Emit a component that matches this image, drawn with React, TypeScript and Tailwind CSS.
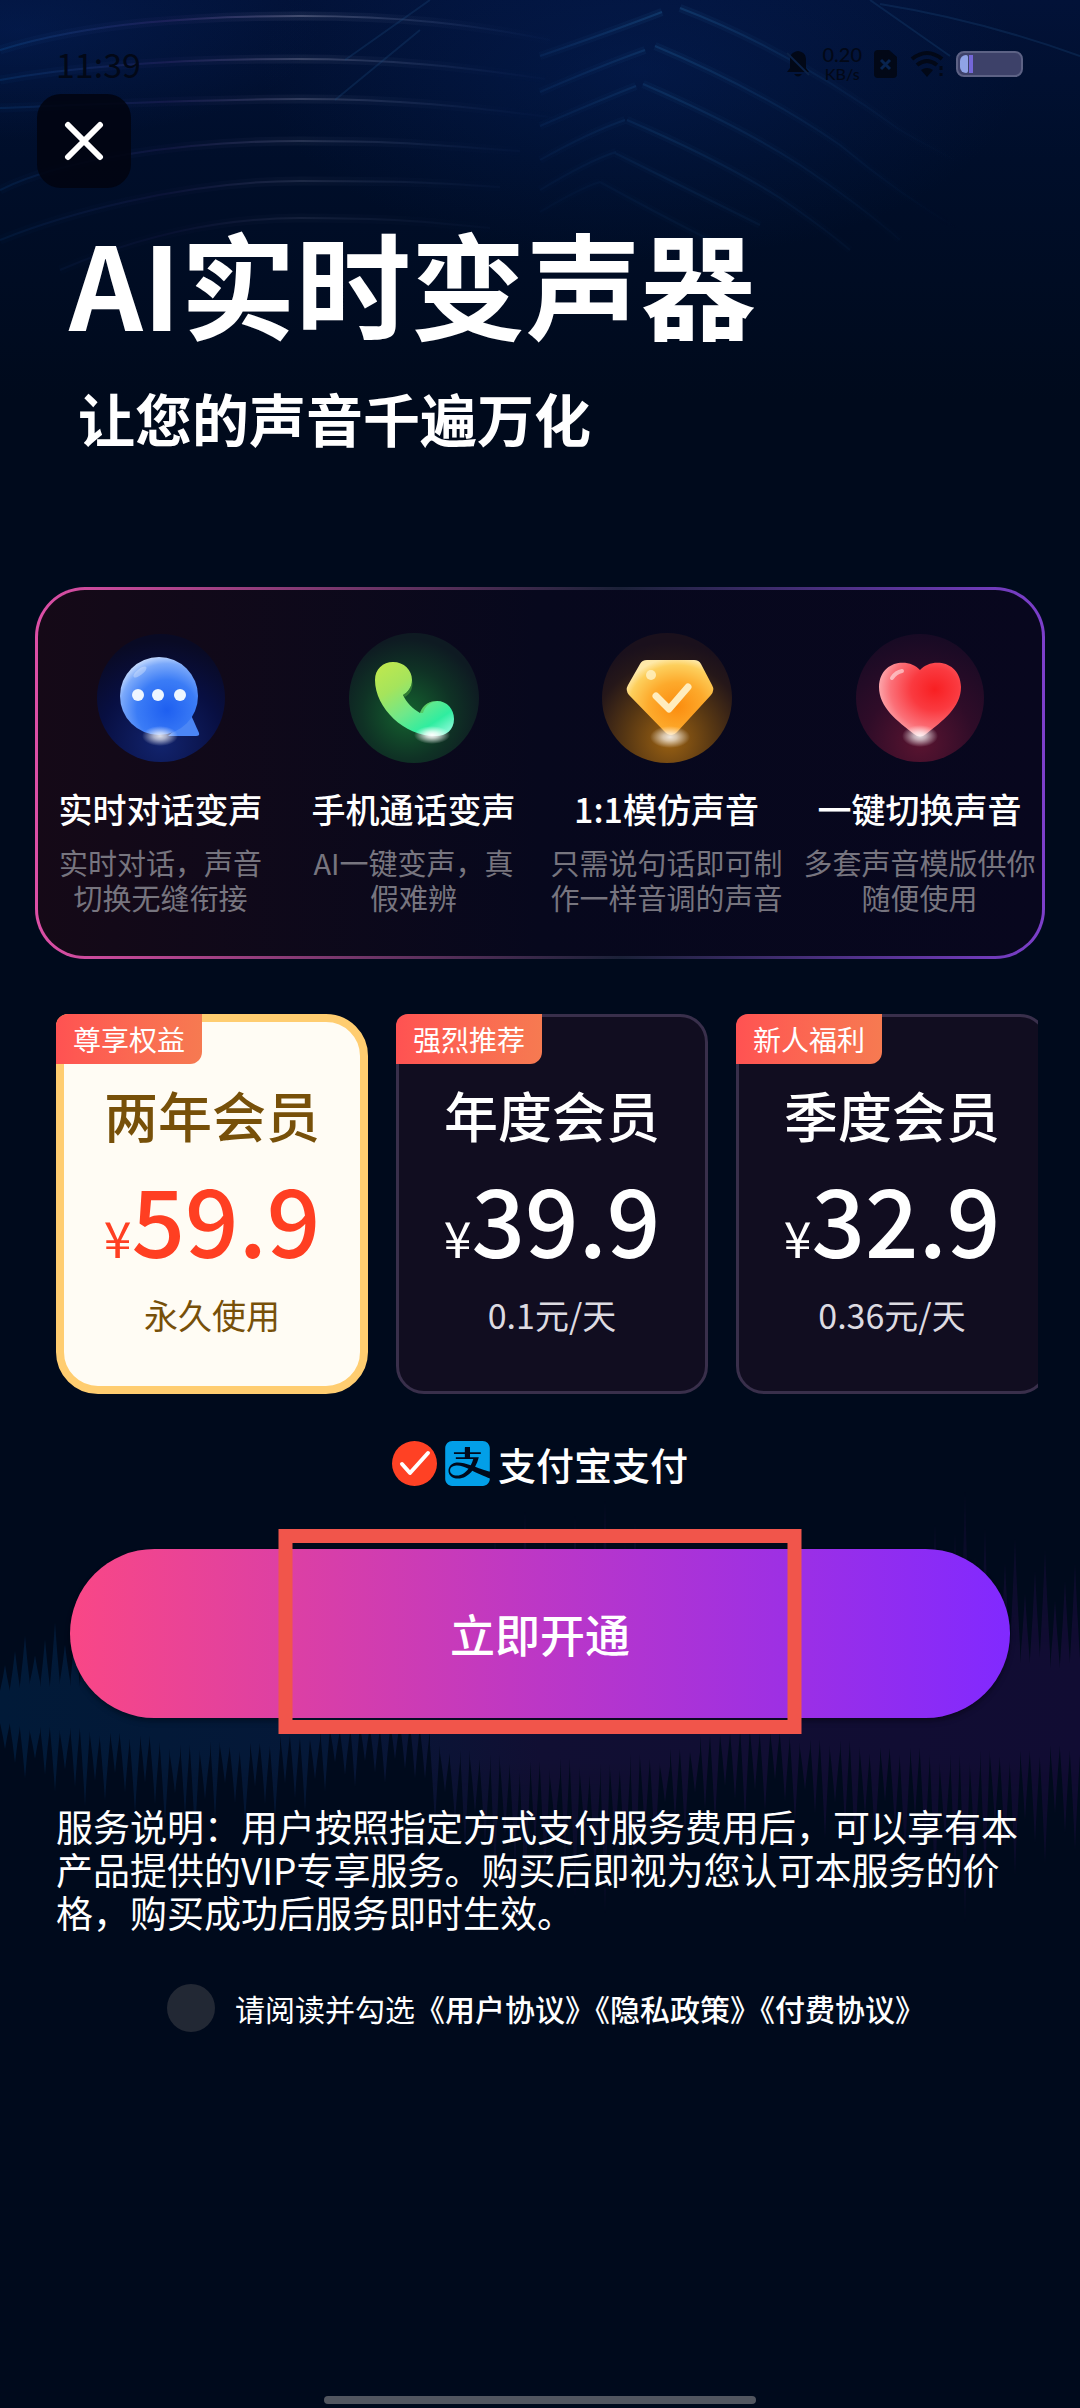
import { useState } from 'react'
import { SiAlipay } from 'react-icons/si'

interface Plan {
  id: string
  badge: string
  name: string
  price: string
  note: string
}

const PLANS: Plan[] = [
  { id: 'two-year', badge: '尊享权益', name: '两年会员', price: '59.9', note: '永久使用' },
  { id: 'year', badge: '强烈推荐', name: '年度会员', price: '39.9', note: '0.1元/天' },
  { id: 'season', badge: '新人福利', name: '季度会员', price: '32.9', note: '0.36元/天' },
]

const FEATURES = [
  { icon: ChatIcon, title: '实时对话变声', text: '实时对话，声音\n切换无缝衔接' },
  { icon: PhoneIcon, title: '手机通话变声', text: 'AI一键变声，真\n假难辨' },
  { icon: GemIcon, title: '1:1模仿声音', text: '只需说句话即可制\n作一样音调的声音' },
  { icon: HeartIcon, title: '一键切换声音', text: '多套声音模版供你\n随便使用' },
]

function ChatIcon() {
  return (
    <svg viewBox="0 0 130 130" className="size-[130px]" aria-hidden="true">
      <defs>
        <radialGradient id="chatBg" cx="0.5" cy="0.85" r="0.8">
          <stop offset="0" stopColor="#12246e" />
          <stop offset="0.6" stopColor="#080f42" />
          <stop offset="1" stopColor="#090a24" />
        </radialGradient>
        <radialGradient id="chatBody" cx="0.6" cy="0.68" r="0.7">
          <stop offset="0" stopColor="#1e5ff0" />
          <stop offset="0.55" stopColor="#3b7cf6" />
          <stop offset="0.85" stopColor="#7ba9fa" />
          <stop offset="1" stopColor="#c3d9fd" />
        </radialGradient>
        <radialGradient id="spot">
          <stop offset="0" stopColor="#fff" />
          <stop offset="0.35" stopColor="#fff" stopOpacity="0.75" />
          <stop offset="1" stopColor="#fff" stopOpacity="0" />
        </radialGradient>
      </defs>
      <circle cx="65" cy="65" r="64" fill="url(#chatBg)" />
      <path d="M95 82 103 100q1 3-3 3H72z" fill="#4b86f5" />
      <circle cx="63" cy="63" r="39" fill="url(#chatBody)" />
      <ellipse cx="44" cy="39" rx="8" ry="3" transform="rotate(-38 44 39)" fill="#fff" opacity="0.3" />
      <circle cx="42" cy="62" r="6" fill="#eef6ff" />
      <circle cx="62" cy="62" r="6" fill="#eef6ff" />
      <circle cx="84" cy="62" r="6" fill="#eef6ff" />
      <ellipse cx="64" cy="103" rx="18" ry="10" fill="url(#spot)" opacity="0.85" />
    </svg>
  )
}

function PhoneIcon() {
  return (
    <svg viewBox="0 0 130 130" className="size-[130px]" aria-hidden="true">
      <defs>
        <radialGradient id="phoneBg" cx="0.45" cy="0.62" r="0.58">
          <stop offset="0" stopColor="#14632f" />
          <stop offset="0.6" stopColor="#0f3225" />
          <stop offset="1" stopColor="#0e1a22" />
        </radialGradient>
        <linearGradient id="phoneBody" x1="0.1" y1="0" x2="0.8" y2="1">
          <stop offset="0" stopColor="#bfe84e" />
          <stop offset="0.3" stopColor="#a5e45c" />
          <stop offset="0.6" stopColor="#6fe88a" />
          <stop offset="0.85" stopColor="#2feda0" />
          <stop offset="1" stopColor="#7df7cf" />
        </linearGradient>
      </defs>
      <circle cx="65" cy="65" r="65" fill="url(#phoneBg)" />
      <path
        d="M26 47c0-11 8-18 18-18 11 0 19 8 19 18 0 7-4 12-9 15 3 7 10 14 17 18 3-8 9-12 17-12 10 0 17 8 17 18 0 11-8 17-18 17C57 104 26 76 26 47z"
        fill="url(#phoneBody)"
      />
      <path d="M54 62c5-3 9-8 9-15 2 8-2 14-7 17zM71 80c2-7 8-12 17-12-7 1-12 5-14 12z" fill="#4fae3c" opacity="0.5" />
      <ellipse cx="83" cy="102" rx="18" ry="9" fill="url(#spot)" />
    </svg>
  )
}

function GemIcon() {
  return (
    <svg viewBox="0 0 130 130" className="size-[130px]" aria-hidden="true">
      <defs>
        <radialGradient id="gemBg" cx="0.52" cy="0.82" r="0.75">
          <stop offset="0" stopColor="#9c6212" />
          <stop offset="0.45" stopColor="#573713" />
          <stop offset="0.8" stopColor="#251719" />
          <stop offset="1" stopColor="#1a101c" />
        </radialGradient>
        <radialGradient id="gemBody" cx="0.58" cy="0.62" r="0.65">
          <stop offset="0" stopColor="#fb8c0e" />
          <stop offset="0.5" stopColor="#fdaa2c" />
          <stop offset="0.85" stopColor="#fdcf5c" />
          <stop offset="1" stopColor="#fee9a8" />
        </radialGradient>
      </defs>
      <circle cx="65" cy="65" r="65" fill="url(#gemBg)" />
      <path
        d="M45 27h47q5 0 7 4l11 21q3 5-1 10L76 98q-7 8-14 0L27 62q-4-5-1-10l12-21q2-4 7-4z"
        fill="url(#gemBody)"
      />
      <circle cx="49" cy="42" r="5" fill="#fff6cf" opacity="0.75" />
      <path d="M54 63l13 13 19-22" fill="none" stroke="#ffecbd" strokeWidth="7" strokeLinecap="round" strokeLinejoin="round" />
      <ellipse cx="68" cy="104" rx="20" ry="11" fill="url(#spot)" opacity="0.85" />
    </svg>
  )
}

function HeartIcon() {
  return (
    <svg viewBox="0 0 130 130" className="size-[130px]" aria-hidden="true">
      <defs>
        <radialGradient id="heartBg" cx="0.5" cy="0.85" r="0.85">
          <stop offset="0" stopColor="#5a1430" />
          <stop offset="0.5" stopColor="#2f0c28" />
          <stop offset="1" stopColor="#170a24" />
        </radialGradient>
        <radialGradient id="heartBody" cx="0.68" cy="0.36" r="0.72">
          <stop offset="0" stopColor="#f81f22" />
          <stop offset="0.4" stopColor="#fa3a40" />
          <stop offset="0.75" stopColor="#fb7078" />
          <stop offset="1" stopColor="#fdb3b8" />
        </radialGradient>
      </defs>
      <circle cx="65" cy="65" r="64" fill="url(#heartBg)" />
      <path
        d="M65 37c10-12 40-11 41 17 0 20-18 34-35 47q-6 5-12 0C42 88 24 74 24 54c1-28 31-29 41-17z"
        fill="url(#heartBody)"
      />
      <path d="M37 45q4-6 10-7" fill="none" stroke="#fff" strokeWidth="4" strokeLinecap="round" opacity="0.5" />
      <ellipse cx="65" cy="103" rx="18" ry="11" fill="url(#spot)" opacity="0.85" />
    </svg>
  )
}

// Faint light trails behind the header
const ARCS = [
  'M0 50C90 22 200 16 300 16s170 8 250 24',
  'M0 80C90 64 200 59 295 59s170 8 250 20',
  'M0 108C100 104 200 99 300 99s170 8 250 18',
  'M0 190C60 160 180 141 300 141s150 6 220 10',
  'M0 240C60 216 180 181 300 181s130 2 200 6',
  'M60 270C130 240 210 218 300 218s130 4 190 10',
]

const RAYS = [
  'M540 56Q610 32 662 12M680 8Q790 50 900 130 960 165 1040 200',
  'M540 92Q600 66 645 50M655 46Q760 90 840 145 900 195 960 230',
  'M540 126Q600 100 636 86M643 84Q740 126 800 165 860 205 900 240',
  'M540 160Q590 132 625 120M627 120Q720 160 780 198 820 225 850 250',
  'M540 190Q590 160 616 152M615 153Q700 195 760 225',
  'M540 212Q580 188 600 182M600 182Q660 215 710 240',
]

function TopGlow() {
  return (
    <svg viewBox="0 0 1080 400" className="absolute inset-x-0 top-0 w-full" aria-hidden="true">
      <defs>
        <linearGradient id="sky" x1="0" y1="0" x2="0" y2="1">
          <stop offset="0" stopColor="#021238" />
          <stop offset="0.4" stopColor="#000e2a" />
          <stop offset="1" stopColor="#000a1c" />
        </linearGradient>
        <linearGradient id="arc" gradientUnits="userSpaceOnUse" x1="0" y1="0" x2="550" y2="0">
          <stop offset="0" stopColor="#0d4a8c" stopOpacity="0.5" />
          <stop offset="0.3" stopColor="#352c72" stopOpacity="0.6" />
          <stop offset="0.55" stopColor="#6b7190" stopOpacity="0.8" />
          <stop offset="1" stopColor="#0e2c66" stopOpacity="0.1" />
        </linearGradient>
        <linearGradient id="ray" gradientUnits="userSpaceOnUse" x1="540" y1="0" x2="960" y2="0">
          <stop offset="0" stopColor="#12407c" stopOpacity="0.4" />
          <stop offset="0.3" stopColor="#1a5288" stopOpacity="0.75" />
          <stop offset="1" stopColor="#0c2f60" stopOpacity="0" />
        </linearGradient>
        <radialGradient id="haze" cx="0.5" cy="0.5" r="0.5">
          <stop offset="0" stopColor="#06276b" stopOpacity="0.35" />
          <stop offset="1" stopColor="#06276b" stopOpacity="0" />
        </radialGradient>
      </defs>
      <rect width="1080" height="400" fill="url(#sky)" />
      <ellipse cx="640" cy="70" rx="380" ry="190" fill="url(#haze)" />
      <ellipse cx="20" cy="30" rx="300" ry="110" fill="url(#haze)" />
      {ARCS.map((d, i) => (
        <g key={d} fill="none" stroke="url(#arc)" opacity={1 - i * 0.14}>
          <path d={d} strokeWidth="9" opacity="0.18" />
          <path d={d} strokeWidth="2" opacity="0.7" />
        </g>
      ))}
      {RAYS.map((d, i) => (
        <g key={d} fill="none" stroke="url(#ray)" opacity={1 - i * 0.15}>
          <path d={d} strokeWidth="8" opacity="0.2" />
          <path d={d} strokeWidth="2" opacity="0.6" />
        </g>
      ))}
      <path d="M880 4Q980 20 1080 56M870 0Q910 28 950 56M345 60 430 0M335 100 420 30" fill="none" stroke="#1b4a7c" strokeWidth="2" opacity="0.3" />
    </svg>
  )
}

// [x, body height, spike height] measured from the middle line
const ENVELOPE = [
  [0, 20, 70],
  [60, 24, 92],
  [110, 30, 110],
  [180, 44, 130],
  [250, 42, 125],
  [330, 24, 92],
  [415, 16, 70],
  [425, 40, 130],
  [500, 62, 190],
  [600, 66, 215],
  [680, 46, 140],
  [730, 22, 110],
  [800, 36, 130],
  [900, 50, 165],
  [960, 56, 215],
  [1030, 50, 170],
  [1090, 44, 130],
]

function envelopeAt(x: number) {
  const next = Math.max(1, ENVELOPE.findIndex(([px]) => px >= x))
  const [x0, body0, spike0] = ENVELOPE[next - 1]
  const [x1, body1, spike1] = ENVELOPE[next]
  const t = (x - x0) / (x1 - x0)
  return { body: body0 + (body1 - body0) * t, spike: spike0 + (spike1 - spike0) * t }
}

function buildWave() {
  let top = 'M0 230'
  let bottom = ''
  for (let i = 0; i < 108; i++) {
    const x = i * 10
    const { body, spike } = envelopeAt(x)
    const height = spike * (0.6 + ((i * 37) % 11) * 0.04)
    const dip = body * (0.8 + ((i * 23) % 7) * 0.06)
    const mid = (height + dip) / 2
    top += `L${x} ${230 - dip}Q${x + 3} ${230 - mid} ${x + 5} ${230 - height}Q${x + 7} ${230 - mid} ${x + 10} ${230 - dip}`
    bottom = `L${x + 10} ${230 + dip}Q${x + 7} ${230 + mid} ${x + 5} ${230 + height}Q${x + 3} ${230 + mid} ${x} ${230 + dip}` + bottom
  }
  return `${top}${bottom}Z`
}

function SoundWave() {
  return (
    <svg viewBox="0 0 1080 460" className="absolute inset-x-0 -top-[72px] w-full" aria-hidden="true">
      <defs>
        <linearGradient id="waveHue" x1="0" x2="1">
          <stop offset="0" stopColor="#011a38" />
          <stop offset="0.3" stopColor="#051838" />
          <stop offset="0.5" stopColor="#110f33" />
          <stop offset="1" stopColor="#110c33" />
        </linearGradient>
        <linearGradient id="waveFade" x1="0" y1="0" x2="0" y2="1">
          <stop offset="0" stopColor="#fff" stopOpacity="0.3" />
          <stop offset="0.38" stopColor="#fff" />
          <stop offset="0.62" stopColor="#fff" />
          <stop offset="1" stopColor="#fff" stopOpacity="0.3" />
        </linearGradient>
        <mask id="waveMask">
          <rect width="1080" height="460" fill="url(#waveFade)" />
        </mask>
      </defs>
      <path d={buildWave()} fill="url(#waveHue)" mask="url(#waveMask)" />
    </svg>
  )
}

function StatusBar() {
  return (
    <div className="flex h-9 items-center justify-between pr-[57px] pl-14 text-[#020817]">
      <time className="text-[34px] leading-9">11:39</time>
      <div className="flex items-center gap-3">
        <svg viewBox="0 0 24 28" className="h-7 w-6" aria-hidden="true">
          <path d="M12 1c-6 1-8 4-8 9v8l-3 4h22l-3-4v-8c0-5-2-8-8-9zM8 24h8q-4 5-8 0z" fill="currentColor" />
          <path d="M1 3l22 22" stroke="#0b2147" strokeWidth="2" />
        </svg>
        <div className="text-center font-['Lato','Noto_Sans_CJK_SC',sans-serif] font-medium">
          <p className="text-[20px] leading-5">0.20</p>
          <p className="text-[16px] leading-5">KB/s</p>
        </div>
        <svg viewBox="0 0 24 28" className="h-7 w-6" aria-hidden="true">
          <path d="M4 0h11l8 7v17q0 4-4 4H4q-4 0-4-4V4q0-4 4-4z" fill="currentColor" />
          <path d="M7 10l9 9m0-9l-9 9" stroke="#08234f" strokeWidth="3" />
        </svg>
        <svg viewBox="0 0 34 28" className="h-7 w-[34px]" fill="none" stroke="currentColor" strokeWidth="4" aria-hidden="true">
          <path d="M2 9Q17-3 32 9M7 15q10-8 20 0" />
          <path d="M11 20q6-4 12 0l-6 7z" fill="currentColor" stroke="none" />
          <path d="M31 16v4m0 3v3" strokeWidth="3" />
        </svg>
        <div className="flex h-[26px] w-[67px] gap-px rounded-lg border-2 border-[#5d6285] bg-[#3d4169] p-0.5">
          <span className="w-2 rounded-l-md rounded-r-xs bg-[#8fa3e6]" />
          <span className="w-1 bg-[#7467d8]" />
        </div>
      </div>
    </div>
  )
}

function PlanCard({ plan, selected, onSelect }: { plan: Plan; selected: boolean; onSelect: () => void }) {
  return (
    <label
      className={
        selected
          ? 'relative block h-[380px] w-[312px] shrink-0 rounded-tl-xl rounded-tr-[42px] rounded-b-[42px] border-8 border-[#ffcd70] bg-[#fffcf4] text-[#775009]'
          : 'relative block h-[380px] w-[312px] shrink-0 rounded-tl-xl rounded-tr-[28px] rounded-b-[28px] border-3 border-[#392f4b] bg-[#110d20] text-white'
      }
    >
      <input type="radio" name="plan" value={plan.id} checked={selected} onChange={onSelect} className="sr-only" />
      <span
        className={
          selected
            ? 'absolute -top-2 -left-2 flex h-[50px] w-[146px] items-center justify-center rounded-tl-xl rounded-br-xl bg-linear-to-r from-[#ff5252] to-[#f67a51] text-[28px] leading-8 text-white'
            : 'absolute -top-[3px] -left-[3px] flex h-[50px] w-[146px] items-center justify-center rounded-tl-xl rounded-br-xl bg-linear-to-r from-[#ff5252] to-[#f67a51] text-[28px] leading-8 text-white'
        }
      >
        {plan.badge}
      </span>
      <span className={selected ? 'flex flex-col items-center pt-[63px]' : 'flex flex-col items-center pt-[68px]'}>
        <span className="text-[54px] leading-[60px] font-medium">{plan.name}</span>
        <span className={selected ? 'mt-6 flex items-baseline text-[#ff3f22]' : 'mt-6 flex items-baseline'}>
          <span className="text-[50px] leading-10">¥</span>
          <span className="text-[94px] leading-[96px] font-medium">{plan.price}</span>
        </span>
        <span className={selected ? 'mt-[30px] text-[34px] leading-10' : 'mt-[30px] text-[34px] leading-10 text-[#dddbe2]'}>{plan.note}</span>
      </span>
    </label>
  )
}

export default function App() {
  const [planId, setPlanId] = useState('two-year')
  const [agreed, setAgreed] = useState(false)

  return (
    <main className="relative flex min-h-screen flex-col overflow-hidden bg-[#000a1c] font-['Noto_Sans_CJK_SC',sans-serif] text-white">
      <TopGlow />

      <header className="relative pt-[46px]">
        <StatusBar />
        <button
          type="button"
          aria-label="关闭"
          className="mt-3 ml-[37px] flex size-[94px] items-center justify-center rounded-3xl bg-[#01040f]/85"
        >
          <svg viewBox="0 0 40 40" className="size-10" fill="none" stroke="currentColor" strokeWidth="6" strokeLinecap="round" aria-hidden="true">
            <path d="M4 4l32 32M36 4L4 36" />
          </svg>
        </button>
        <h1 className="mt-[33px] ml-[69px] text-[115px] leading-[120px] font-bold">AI实时变声器</h1>
        <p className="mt-11 ml-[78px] text-[57px] leading-[64px] font-bold">让您的声音千遍万化</p>
      </header>

      {/* Feature panel with gradient border */}
      <section className="relative mx-[35px] mt-[138px] rounded-[50px] bg-linear-to-r/srgb from-[#dd4fa6] via-[#1b2138] via-58% to-[#7c3fcb] p-[3px]">
        <div className="rounded-[47px] bg-linear-to-r from-[#150917] via-[#07081d] via-50% to-[#08071e] pt-[43px] pb-[41px]">
          <ul className="-mx-1 grid grid-cols-4">
            {FEATURES.map(({ icon: Icon, title, text }) => (
              <li key={title} className="flex flex-col items-center text-center">
                <Icon />
                <h2 className="mt-[26px] text-[34px] leading-10 font-medium">{title}</h2>
                <p className="mt-4 text-[29px] leading-[35px] whitespace-pre text-[#77757f]">{text}</p>
              </li>
            ))}
          </ul>
        </div>
      </section>

      {/* Plans */}
      <fieldset className="relative mt-[55px] mr-[42px] ml-14 flex min-w-0 gap-7 overflow-hidden">
        {PLANS.map((plan) => (
          <PlanCard key={plan.id} plan={plan} selected={plan.id === planId} onSelect={() => setPlanId(plan.id)} />
        ))}
      </fieldset>

      {/* Payment method */}
      <label className="relative mt-[47px] flex h-[45px] items-center justify-center gap-2">
        <input type="radio" name="pay" defaultChecked className="sr-only" />
        <svg viewBox="0 0 45 45" className="size-[45px]" aria-hidden="true">
          <circle cx="22.5" cy="22.5" r="22.5" fill="#ff4124" />
          <path d="M10 23l8 9 18-20" fill="none" stroke="#fff" strokeWidth="4" strokeLinecap="round" strokeLinejoin="round" />
        </svg>
        <SiAlipay className="size-[45px] text-[#029fe8]" />
        <span className="text-[38px] leading-[45px] font-medium">支付宝支付</span>
      </label>

      <div className="relative mt-[63px]">
        <SoundWave />
        <div className="relative mx-[70px]">
          <button
            type="button"
            className="block h-[169px] w-full rounded-full bg-linear-to-r/srgb from-[#f94786] via-[#bc37c6] to-[#8129ff] text-[45px] font-medium shadow-md shadow-black/30"
          >
            立即开通
          </button>
          <div className="pointer-events-none absolute -top-5 -bottom-4 left-1/2 w-[523px] -translate-x-1/2 border-14 border-[#f1554b]" />
        </div>
      </div>

      <p className="relative mt-[87px] mr-[50px] ml-14 text-[37px] leading-[43px]">
        服务说明：用户按照指定方式支付服务费用后，可以享有本产品提供的VIP专享服务。购买后即视为您认可本服务的价格，购买成功后服务即时生效。
      </p>

      <div className="relative mt-[50px] flex items-center justify-center gap-5 pl-3 text-[30px] leading-9">
        <input
          id="agree"
          type="checkbox"
          checked={agreed}
          onChange={(e) => setAgreed(e.target.checked)}
          className="size-12 shrink-0 appearance-none rounded-full bg-[#222834] checked:bg-[#ff4124]"
        />
        <p>
          <label htmlFor="agree">请阅读并勾选</label>
          <a href="#user" className="font-medium">《用户协议》</a>
          <a href="#privacy" className="font-medium">《隐私政策》</a>
          <a href="#payment" className="font-medium">《付费协议》</a>
        </p>
      </div>

      <div className="relative mx-auto mt-auto mb-1 h-2 w-2/5 rounded-full bg-[#52565f]" />
    </main>
  )
}
